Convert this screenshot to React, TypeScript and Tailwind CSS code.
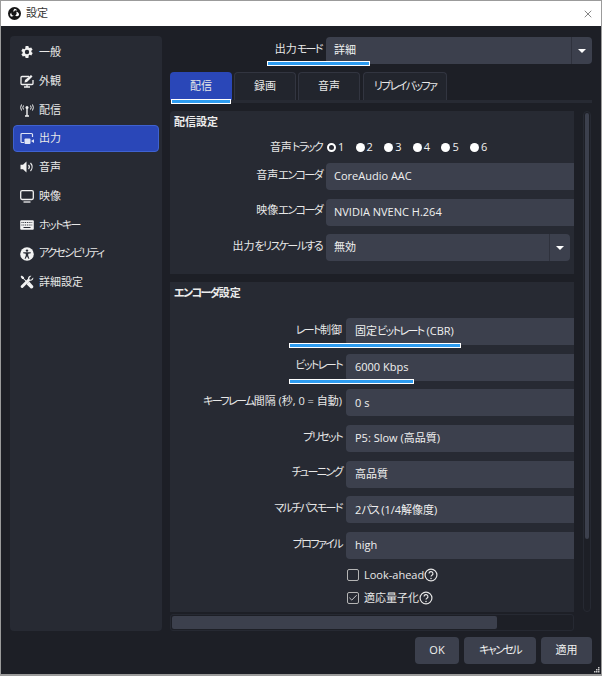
import { Check, X } from 'lucide-react';
import type { ReactNode } from 'react';

const font = "font-['Open_Sans','Noto_Sans_CJK_JP',sans-serif] [font-feature-settings:'palt']";

// kana in the reference font are much narrower than the kanji, so tighten just those runs
const Jp = ({ text }: { text: string }) => (
  <>
    {text.split(/([ぁ-んァ-ヶー]+)/).map((part, i) =>
      i % 2 === 1 ? (
        <span key={i} className="tracking-[-1.6px]">
          {part}
        </span>
      ) : (
        part
      ),
    )}
  </>
);

const GearIcon = () => (
  <svg viewBox="0 0 14 14" className="h-[14px] w-[14px]" fill="#f2f2f2">
    <path
      fillRule="evenodd"
      d="M5.6 1h2.8l.3 1.6 1 .5 1.5-.7 1.4 2.4-1.3 1 .1 1.2 1.3 1-1.4 2.4-1.5-.7-1 .5L8.4 13H5.6l-.3-1.6-1-.5-1.5.7-1.4-2.4 1.3-1-.1-1.2-1.3-1 1.4-2.4 1.5.7 1-.5zM7 4.8a2.2 2.2 0 1 0 0 4.4 2.2 2.2 0 0 0 0-4.4z"
    />
  </svg>
);

const AppearanceIcon = () => (
  <svg viewBox="0 0 14 14" className="h-[14px] w-[14px]" fill="none" stroke="#f2f2f2">
    <path d="M9 2.500H2a1 1 0 0 0-1 1v6a1 1 0 0 0 1 1h10a1 1 0 0 0 1-1V6" strokeWidth="1.300" />
    <path d="M4 13h6M7 10.500V13" strokeWidth="1.300" />
    <path d="M4.500 8.500 5 6l6-5 1.500 1.500-5.500 5.500z" fill="#f2f2f2" stroke="none" />
  </svg>
);

const StreamIcon = () => (
  <svg viewBox="0 0 14 14" className="h-[14px] w-[14px]" fill="none" stroke="#f2f2f2" strokeWidth="1">
    <circle cx="7" cy="4.500" r="1.500" fill="#f2f2f2" stroke="none" />
    <path d="M7 5.500V13M5 13h4" strokeWidth="1.400" />
    <path d="M3.500 2.500a3.500 3.500 0 0 0 0 4M10.500 2.500a3.500 3.500 0 0 1 0 4M1.500 1.500a6 6 0 0 0 0 6M12.500 1.500a6 6 0 0 1 0 6" />
  </svg>
);

const OutputIcon = () => (
  <svg viewBox="0 0 14 14" className="h-[14px] w-[14px]" fill="none" stroke="#dfe3f5">
    <path d="M4 10.500H2a1 1 0 0 1-1-1V2.500a1 1 0 0 1 1-1h9.500a1 1 0 0 1 1 1V5" strokeWidth="1.200" />
    <rect x="4.500" y="6.500" width="6" height="5.500" rx="1" fill="#dfe3f5" stroke="none" />
    <path d="M11 9l3-1.800v3.800z" fill="#dfe3f5" stroke="none" />
  </svg>
);

const AudioIcon = () => (
  <svg viewBox="0 0 14 14" className="h-[14px] w-[14px]" fill="none" stroke="#f2f2f2" strokeWidth="1.200">
    <path d="M0.500 4.800h2.500l3.500-3.300v11L3 9.200H0.500z" fill="#f2f2f2" stroke="none" />
    <path d="M8.500 5a3 3 0 0 1 0 4M10.500 3a6 6 0 0 1 0 8" />
  </svg>
);

const VideoIcon = () => (
  <svg viewBox="0 0 14 14" className="h-[14px] w-[14px]" fill="none" stroke="#f2f2f2" strokeWidth="1.300">
    <rect x="0.700" y="1.700" width="12.600" height="8.800" rx="1.400" />
    <path d="M3.500 13h7" />
  </svg>
);

const KeyboardIcon = () => (
  <svg viewBox="0 0 14 14" className="h-[14px] w-[14px]">
    <rect x="0.200" y="2.200" width="13.600" height="9.600" rx="1" fill="#f2f2f2" />
    <path d="M1.500 4.500h11M1.500 7h11" stroke="#272a33" strokeWidth="1" strokeDasharray="1 .8" fill="none" />
    <path d="M3.500 9.500h7" stroke="#272a33" strokeWidth="1" />
  </svg>
);

const AccessIcon = () => (
  <svg viewBox="0 0 14 14" className="h-[14px] w-[14px]">
    <circle cx="7" cy="7" r="6.800" fill="#f2f2f2" />
    <circle cx="7" cy="3.600" r="1.200" fill="#272a33" />
    <path d="M3.200 5.200h7.600v1.100L8.200 6.800v1.700l1.200 3.300h-1L7 9.300l-1.400 2.500h-1l1.200-3.300V6.800L3.200 6.300z" fill="#272a33" />
  </svg>
);

const ToolsIcon = () => (
  <svg viewBox="0 0 14 14" className="h-[14px] w-[14px]" fill="#f2f2f2">
    <path d="M1.700.600 4 2.300v1.100l4.200 4.200 1-1 4 4.400c.6 1.800-.9 3-2.400 2.400L6.500 9.200l1-1L3.300 4H2.200L.600 1.700z" />
    <path d="M13.200 2.600 11 4.700l-1.400-.3-.3-1.400L11.400.8C9.500.200 7.700 1.800 8 3.800L.9 10.800c-.9 1 .6 3 2 2L9.900 5.800c2 .400 3.900-1.300 3.300-3.200z" />
  </svg>
);

const ObsLogo = () => (
  <svg viewBox="0 0 14 14" className="h-[13px] w-[13px]">
    <circle cx="7" cy="7" r="7" fill="#151515" />
    <path d="M7 1.900a3 3 0 0 1 2.900 2.100A2.700 2.700 0 0 0 6.200 5.600 3 3 0 0 1 7 1.900z" fill="#fff" />
    <path d="M11.900 8.500A3 3 0 0 1 7.700 9.100a2.700 2.700 0 0 0 1-3.900 3 3 0 0 1 3.200 3.300z" fill="#fff" />
    <path d="M2.800 10a3 3 0 0 1 .7-4 2.700 2.700 0 0 0 2.700 3.200 3 3 0 0 1-3.400.8z" fill="#fff" />
  </svg>
);

const HelpIcon = () => (
  <svg viewBox="0 0 13 13" className="h-[14px] w-[14px]" fill="none" stroke="#e6e6e6">
    <circle cx="6.500" cy="6.500" r="5.500" strokeWidth="1.100" />
    <path d="M4.700 5.200a1.800 1.800 0 1 1 2.700 1.500c-.6.400-.9.700-.9 1.300" strokeWidth="1.100" />
    <circle cx="6.500" cy="9.700" r=".7" fill="#e6e6e6" stroke="none" />
  </svg>
);

const navItems: { label: string; icon: ReactNode; active?: boolean }[] = [
  { label: '一般', icon: <GearIcon /> },
  { label: '外観', icon: <AppearanceIcon /> },
  { label: '配信', icon: <StreamIcon /> },
  { label: '出力', icon: <OutputIcon />, active: true },
  { label: '音声', icon: <AudioIcon /> },
  { label: '映像', icon: <VideoIcon /> },
  { label: 'ホットキー', icon: <KeyboardIcon /> },
  { label: 'アクセシビリティ', icon: <AccessIcon /> },
  { label: '詳細設定', icon: <ToolsIcon /> },
];

const encoderRows = [
  { label: 'レート制御', value: '固定ビットレート (CBR)' },
  { label: 'ビットレート', value: '6000 Kbps' },
  { label: 'キーフレーム間隔 (秒, 0 = 自動)', value: '0 s' },
  { label: 'プリセット', value: 'P5: Slow (高品質)' },
  { label: 'チューニング', value: '高品質' },
  { label: 'マルチパスモード', value: '2パス (1/4解像度)' },
  { label: 'プロファイル', value: 'high' },
];

const Mark = ({ className }: { className: string }) => (
  <div className={`absolute h-[5px] border border-white bg-[#2d9cf0] ${className}`} />
);

const Combo = ({ value, className }: { value: string; className: string }) => (
  <div className={`flex h-[27px] items-center rounded-[4px] bg-[#3c404d] pl-2 text-[#f0f0f0] ${className}`}>
    <span className="flex-1">{value}</span>
    <div className="h-full w-px bg-[#2f323d]" />
    <div className="flex h-full w-[20px] shrink-0 items-center justify-center">
      <div className="h-0 w-0 border-x-[4px] border-t-[4px] border-x-transparent border-t-white" />
    </div>
  </div>
);

const Row = ({ label, labelWidth, children }: { label: string; labelWidth: string; children: ReactNode }) => (
  <div className="relative flex h-[27px] items-center">
    <div className={`shrink-0 pb-[3px] pr-1 text-right whitespace-nowrap text-[#e8e8e8] ${labelWidth}`}>
      <Jp text={label} />
    </div>
    {children}
  </div>
);

const Field = ({ value, className = 'pl-2' }: { value: string; className?: string }) => (
  <div className={`flex h-[27px] flex-1 items-center rounded-l-[4px] bg-[#3c404d] text-[#f0f0f0] ${className}`}>
    <span>
      <Jp text={value} />
    </span>
  </div>
);

const Tab = ({ label, className }: { label: string; className: string }) => (
  <div className={`flex items-center justify-center whitespace-nowrap rounded-t-[4px] border border-b-0 border-[#323540] bg-[#22252d] text-[#e8e8e8] ${className}`}>
    <Jp text={label} />
  </div>
);

export default function App() {
  return (
    <div className={`relative flex h-[676px] w-[602px] flex-col overflow-hidden border border-b-2 border-[#9b9b9b] bg-[#1d1f26] text-[11px] ${font}`}>
      <div className="flex h-[25px] shrink-0 items-center bg-white pl-[7px] pr-[7px] text-[#333]">
        <ObsLogo />
        <span className="ml-[5px] flex-1 text-[11px]">設定</span>
        <X className="h-[12px] w-[12px]" strokeWidth={1.2} />
      </div>

      <div className="flex flex-1 gap-2 px-[9px] pt-[10px]">
        <div className="flex h-[595px] w-[152px] shrink-0 flex-col rounded-[4px] bg-[#272a33] px-[3px] pt-[2px]">
          {navItems.map((item) => (
            <div
              key={item.label}
              className={`flex shrink-0 items-center gap-[5px] rounded-[4px] text-[#e8e8e8] ${
                item.active
                  ? 'my-[0.875px] h-[27px] border border-[#3f62d0] bg-[#2a47b8] pl-[6px]'
                  : 'h-[28.75px] pl-[7px]'
              }`}
            >
              {item.icon}
              <span>
                <Jp text={item.label} />
              </span>
            </div>
          ))}
        </div>

        <div className="flex w-[422px] flex-col">
          <div className="relative mt-px flex h-[27px] items-center">
            <div className="w-[156px] pb-[3px] pr-1 text-right text-[#e8e8e8]">
              <Jp text="出力モード" />
            </div>
            <Combo value="詳細" className="flex-1" />
            <Mark className="left-[97px] top-[24px] w-[103px]" />
          </div>

          <div className="mt-2 flex h-[28px] gap-[2px]">
            <div className="relative flex w-[62px] items-center justify-center rounded-t-[4px] bg-[#2a47b8] text-[#e8e8e8]">
              配信
              <Mark className="left-px top-[27px] w-[60px]" />
            </div>
            <Tab label="録画" className="w-[62px]" />
            <Tab label="音声" className="w-[62px]" />
            <Tab label="リプレイバッファ" className="ml-px w-[84px]" />
          </div>
          <div className="h-[3px] bg-[#272a33]" />

          <div className="mt-2 flex h-[501px] gap-[9px]">
            <div className="flex w-[404px] flex-col gap-2 overflow-hidden">
              <div className="flex h-[163px] shrink-0 flex-col rounded-tl-[4px] bg-[#272a33]">
                <div className="mt-px flex h-5 items-center px-[4px] font-semibold text-[#ececec]">配信設定</div>
                <div className="mt-[7px] flex h-4 items-center">
                  <div className="w-[156px] pr-1 text-right text-[#e8e8e8]">
                    <Jp text="音声トラック" />
                  </div>
                  <div className="flex text-[#f0f0f0]">
                    {['1', '2', '3', '4', '5', '6'].map((n, i) => (
                      <div key={n} className="flex w-[28.6px] items-center gap-[2px] pl-px">
                        {i === 0 ? (
                          <div className="h-[9px] w-[9px] rounded-full border-2 border-white bg-[#272a33]" />
                        ) : (
                          <div className="h-[9px] w-[9px] rounded-full bg-white" />
                        )}
                        <span>{n}</span>
                      </div>
                    ))}
                  </div>
                </div>
                <div className="mt-2 flex flex-col gap-[8.5px]">
                  <Row label="音声エンコーダ" labelWidth="w-[156px]">
                    <Field value="CoreAudio AAC" />
                  </Row>
                  <Row label="映像エンコーダ" labelWidth="w-[156px]">
                    <Field value="NVIDIA NVENC H.264" />
                  </Row>
                  <Row label="出力をリスケールする" labelWidth="w-[156px]">
                    <Combo value="無効" className="mr-[4px] flex-1" />
                  </Row>
                </div>
              </div>

              <div className="flex flex-1 flex-col bg-[#272a33]">
                <div className="mt-px flex h-5 items-center px-[4px] font-semibold text-[#ececec]">
                  <Jp text="エンコーダ設定" />
                </div>
                <div className="mt-[15px] flex flex-col gap-[8.67px]">
                  {encoderRows.map((row, i) => (
                    <Row key={row.label} label={row.label} labelWidth="w-[176px]">
                      <Field value={row.value} className="pl-[9px]" />
                      {i === 0 && <Mark className="left-[119px] top-[25px] w-[172px]" />}
                      {i === 1 && <Mark className="left-[119px] top-[25px] w-[125px]" />}
                    </Row>
                  ))}
                </div>
                <div className="ml-[177px] mt-[8px] flex flex-col gap-[7px] text-[#e8e8e8]">
                  <div className="flex h-4 items-center gap-[5px]">
                    <div className="h-[12px] w-[12px] rounded-[2px] border border-[#b5b5b5]" />
                    <span className="flex items-center">
                      Look-ahead
                      <HelpIcon />
                    </span>
                  </div>
                  <div className="flex h-4 items-center gap-[5px]">
                    <div className="flex h-[12px] w-[12px] items-center justify-center rounded-[2px] border border-[#b5b5b5]">
                      <Check className="h-[10px] w-[10px] text-[#e8e8e8]" strokeWidth={2} />
                    </div>
                    <span className="flex items-center">
                      適応量子化
                      <HelpIcon />
                    </span>
                  </div>
                </div>
              </div>
            </div>

            <div className="h-full w-[8px] rounded-[4px] border border-[#262932] bg-[#1d1f26] p-px">
              <div className="h-[426px] rounded-[3px] bg-[#3c404d]" />
            </div>
          </div>

          <div className="mt-[2px] h-[17px] w-[404px] rounded-[3px] border border-[#262932] p-px">
            <div className="h-full w-[325px] rounded-[2px] bg-[#3c404d]" />
          </div>
        </div>
      </div>

      <div className="mb-[10px] mr-[9px] mt-[6px] flex h-[27px] justify-end gap-[5px] text-[#f0f0f0]">
        <div className="flex w-[44px] items-center justify-center rounded-[4px] bg-[#3c404d]">OK</div>
        <div className="flex w-[72px] items-center justify-center rounded-[4px] bg-[#3c404d]">
          <Jp text="キャンセル" />
        </div>
        <div className="flex w-[51px] items-center justify-center rounded-[4px] bg-[#3c404d]">適用</div>
      </div>

      <svg viewBox="0 0 6 6" className="absolute bottom-px right-px h-[6px] w-[6px]" fill="#c8c8c8">
        <rect x="4" y="0" width="1.500" height="1.500" />
        <rect x="2" y="2" width="1.500" height="1.500" />
        <rect x="4" y="2" width="1.500" height="1.500" />
        <rect x="0" y="4" width="1.500" height="1.500" />
        <rect x="2" y="4" width="1.500" height="1.500" />
        <rect x="4" y="4" width="1.500" height="1.500" />
      </svg>
    </div>
  );
}
